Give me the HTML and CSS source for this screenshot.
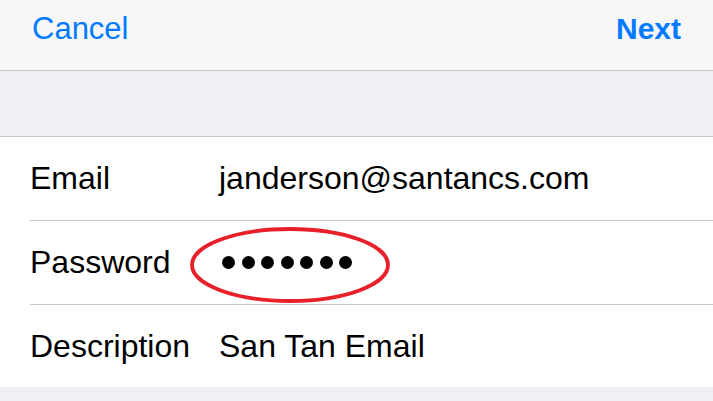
FILE: index.html
```html
<!DOCTYPE html>
<html>
<head>
<meta charset="utf-8">
<link rel="stylesheet" href="styles.css">
</head>
<body>
<div class="nav">
  <span class="nav-btn">Cancel</span>
  <span class="nav-btn nav-next">Next</span>
</div>
<div class="band"></div>
<div class="list">
  <div class="row">
    <div class="cell">
      <span class="label">Email</span>
      <span class="value">janderson@santancs.com</span>
    </div>
  </div>
  <div class="row">
    <div class="cell">
      <span class="label">Password</span>
      <span class="value pw">
        <span class="dots" aria-label="password"><i></i><i></i><i></i><i></i><i></i><i></i><i></i></span>
        <svg class="ring" width="204" height="80" viewBox="0 0 204 80"><ellipse cx="102" cy="40" rx="98" ry="36" fill="none" stroke="#e8202a" stroke-width="3.8"/></svg>
      </span>
    </div>
  </div>
  <div class="row last">
    <div class="cell">
      <span class="label">Description</span>
      <span class="value">San Tan Email</span>
    </div>
  </div>
</div>
<div class="footer"></div>
</body>
</html>
```

FILE: styles.css
```css
html, body {
  margin: 0;
  padding: 0;
  background: #efeff4;
  font-family: "Liberation Sans", Arial, sans-serif;
  width: 713px;
  height: 401px;
  overflow: hidden;
}

.nav {
  box-sizing: border-box;
  height: 71px;
  background: #f7f7f8;
  border-bottom: 1px solid #c8c7cc;
  display: flex;
  justify-content: space-between;
  align-items: flex-start;
  padding: 11px 32px 0 32px;
}

.nav-btn {
  color: #007aff;
  font-size: 31px;
  line-height: 36px;
}

.nav-next {
  font-weight: bold;
  font-size: 30px;
}

.band {
  height: 65px;
  background: #efeff4;
  border-bottom: 1px solid #c8c7cc;
}

.list {
  background: #ffffff;
}

.row {
  padding-left: 30px;
}

.cell {
  height: 83px;
  border-bottom: 1px solid #c8c7cc;
  display: flex;
  align-items: center;
}

.row.last .cell {
  height: 82px;
  border-bottom: none;
}

.label {
  width: 189px;
  font-size: 32px;
  color: #000;
}

.value {
  font-size: 32px;
  color: #000;
}

.pw {
  position: relative;
  display: flex;
  align-items: center;
  height: 40px;
  padding-left: 3px;
}

.dots {
  display: flex;
  gap: 6.5px;
}

.dots i {
  display: block;
  width: 13px;
  height: 13px;
  border-radius: 50%;
  background: #000;
}

.ring {
  position: absolute;
  left: -31px;
  top: -18px;
}

.footer {
  height: 14px;
  background: #efeff4;
}
```
